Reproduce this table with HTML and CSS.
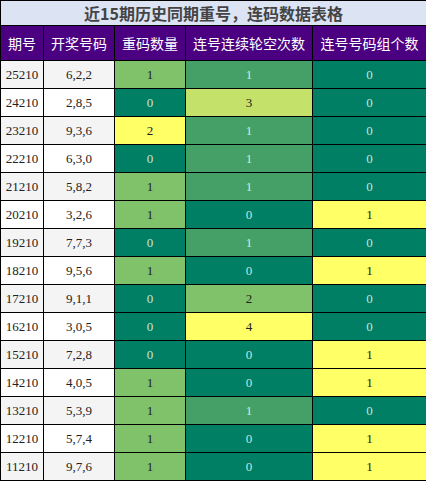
FILE: index.html
```html
<!DOCTYPE html>
<html>
<head>
    <meta charset="utf-8">
    <title>近15期历史同期重号，连码数据表格</title>
    <link rel="stylesheet" href="styles.css">
</head>
<body>
    <table class="data-table">
        <colgroup>
            <col class="col-issue">
            <col class="col-draw">
            <col class="col-repeat">
            <col class="col-streak">
            <col class="col-group">
        </colgroup>
        <thead>
            <tr>
                <th colspan="5" class="title">近15期历史同期重号，连码数据表格</th>
            </tr>
            <tr class="head">
                <th>期号</th>
                <th>开奖号码</th>
                <th>重码数量</th>
                <th>连号连续轮空次数</th>
                <th>连号号码组个数</th>
            </tr>
        </thead>
        <tbody>
            <tr><td>25210</td><td>6,2,2</td><td class="c-green">1</td><td class="c-mid">1</td><td class="c-dark">0</td></tr>
            <tr><td>24210</td><td>2,8,5</td><td class="c-dark">0</td><td class="c-lime">3</td><td class="c-dark">0</td></tr>
            <tr><td>23210</td><td>9,3,6</td><td class="c-yellow">2</td><td class="c-mid">1</td><td class="c-dark">0</td></tr>
            <tr><td>22210</td><td>6,3,0</td><td class="c-dark">0</td><td class="c-mid">1</td><td class="c-dark">0</td></tr>
            <tr><td>21210</td><td>5,8,2</td><td class="c-green">1</td><td class="c-mid">1</td><td class="c-dark">0</td></tr>
            <tr><td>20210</td><td>3,2,6</td><td class="c-green">1</td><td class="c-dark">0</td><td class="c-yellow">1</td></tr>
            <tr><td>19210</td><td>7,7,3</td><td class="c-dark">0</td><td class="c-mid">1</td><td class="c-dark">0</td></tr>
            <tr><td>18210</td><td>9,5,6</td><td class="c-green">1</td><td class="c-dark">0</td><td class="c-yellow">1</td></tr>
            <tr><td>17210</td><td>9,1,1</td><td class="c-dark">0</td><td class="c-green">2</td><td class="c-dark">0</td></tr>
            <tr><td>16210</td><td>3,0,5</td><td class="c-dark">0</td><td class="c-yellow">4</td><td class="c-dark">0</td></tr>
            <tr><td>15210</td><td>7,2,8</td><td class="c-dark">0</td><td class="c-dark">0</td><td class="c-yellow">1</td></tr>
            <tr><td>14210</td><td>4,0,5</td><td class="c-green">1</td><td class="c-dark">0</td><td class="c-yellow">1</td></tr>
            <tr><td>13210</td><td>5,3,9</td><td class="c-green">1</td><td class="c-mid">1</td><td class="c-dark">0</td></tr>
            <tr><td>12210</td><td>5,7,4</td><td class="c-green">1</td><td class="c-dark">0</td><td class="c-yellow">1</td></tr>
            <tr><td>11210</td><td>9,7,6</td><td class="c-green">1</td><td class="c-dark">0</td><td class="c-yellow">1</td></tr>
        </tbody>
    </table>
</body>
</html>
```

FILE: styles.css
```css
body {
    margin: 0;
    background-color: #ffffff;
}
.data-table {
    width: 426px;
    border-collapse: collapse;
    table-layout: fixed;
    font-family: "Liberation Serif", "Noto Sans CJK SC", serif;
    font-size: 13px;
    color: #222;
}
.col-issue { width: 43px; }
.col-draw { width: 71px; }
.col-repeat { width: 71px; }
.col-streak { width: 127px; }
.col-group { width: 114px; }
.data-table th,
.data-table td {
    border: 1px solid #000;
    text-align: center;
    padding: 0;
}
.title {
    height: 24px;
    background-color: #dce3f2;
    color: #444;
    font-family: "Noto Sans CJK SC", sans-serif;
    font-size: 16px;
    font-weight: bold;
    border-color: #333;
}
.head th {
    height: 34px;
    background-color: #4b0082;
    color: #fff;
    font-family: "Noto Sans CJK SC", sans-serif;
    font-size: 14px;
    font-weight: normal;
}
.data-table td {
    height: 27px;
}
tbody tr:nth-child(odd) td {
    background-color: #f4f4f4;
}
tbody tr:nth-child(even) td {
    background-color: #ffffff;
}
tbody tr td.c-green { background-color: #80c269; color: #222; }
tbody tr td.c-mid { background-color: #44a067; color: #d4eadb; }
tbody tr td.c-dark { background-color: #007f65; color: #c9e4d8; }
tbody tr td.c-yellow { background-color: #ffff66; color: #222; }
tbody tr td.c-lime { background-color: #c4e26a; color: #222; }
```
